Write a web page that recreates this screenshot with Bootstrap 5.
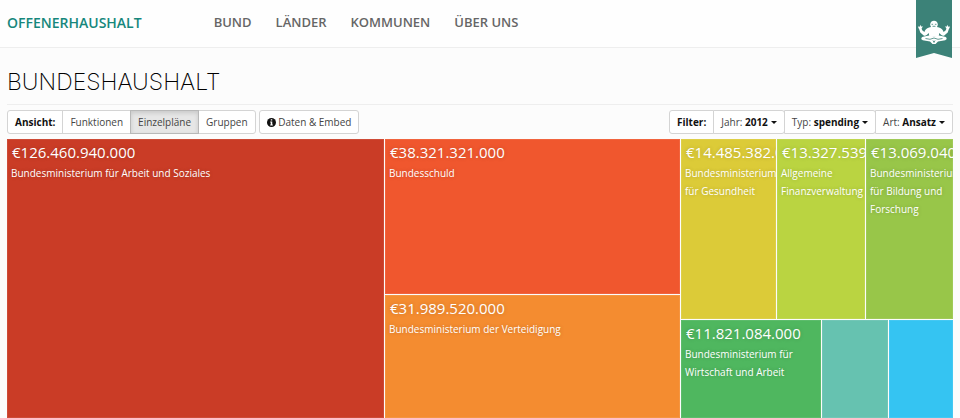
<!DOCTYPE html>
<html lang="de">
<head>
<meta charset="utf-8">
<meta name="viewport" content="width=device-width, initial-scale=1">
<title>OffenerHaushalt – Bundeshaushalt</title>
<link href="https://cdn.jsdelivr.net/npm/bootstrap@5.3.0/dist/css/bootstrap.min.css" rel="stylesheet">
<style>
body { font-family: "Open Sans", sans-serif; font-size: 10px; background: #fcfcfc; color: #333; }
.page-pad { padding-left: 7px; padding-right: 7px; }
.site-nav { height: 48px; background: #fefefe; border-bottom: 1px solid #eee; padding-bottom: 2px; }
.site-nav a { font-size: 13px; font-weight: 600; color: #666; text-decoration: none; }
.site-nav .brand-link { font-size: 14px; line-height: 20px; color: #16877c; margin-right: 72px; }
.site-nav .menu { gap: 24px; }
.ribbon { top: 0; right: 8px; width: 36px; height: 58px; }
.page-title { font-family: Inter, "Liberation Sans", sans-serif; font-weight: 200; font-size: 23px; line-height: 30px; color: #000; padding: 19px 0 7px; border-bottom: 1px solid #eee; }
.toolbar { padding: 5px 0 5px; gap: 3px; }
.toolbar .btn { --bs-btn-font-size: 10px; --bs-btn-padding-x: 7px; --bs-btn-padding-y: 3px; --bs-btn-line-height: 16px; --bs-btn-border-radius: 3px; --bs-btn-bg: #fff; --bs-btn-border-color: #d4d4d4; --bs-btn-color: #444; --bs-btn-hover-bg: #eee; --bs-btn-hover-border-color: #bbb; --bs-btn-active-bg: #e6e6e6; --bs-btn-active-border-color: #b8b8b8; --bs-btn-active-color: #444; }
.toolbar .btn.active { box-shadow: inset 0 2px 4px rgba(0,0,0,.13); }
.toolbar strong { color: #111; }
.toolbar .dropdown-toggle::after { margin-left: 3px; vertical-align: 2px; border-top-width: 3px; border-left-width: 3px; border-right-width: 3px; color: #111; }
.info-mark { width: 9px; height: 9px; vertical-align: -1px; }
.treemap, .treemap div { gap: 1px; }
.treemap div { min-width: 0; min-height: 0; }
.tile { flex-basis: 0; overflow: hidden; color: #fff; text-decoration: none; box-shadow: inset 0 0 0 1px rgba(255,255,255,.08); text-shadow: 0 0 4px rgba(0,0,0,.2); min-width: 0; min-height: 0; }
.tile:hover { color: #fff; }
.amount { display: block; font-size: 15px; line-height: 22px; padding: 2px 0 0 5px; white-space: nowrap; }
.caption { display: block; font-size: 10px; line-height: 18px; padding: 1px 0 0 4px; }
.basis-0 { flex-basis: 0; }
</style>
<script src="https://cdn.jsdelivr.net/npm/bootstrap@5.3.0/dist/js/bootstrap.bundle.min.js"></script>
</head>
<body class="d-flex flex-column min-vh-100 position-relative">
<header>
  <nav class="site-nav page-pad d-flex align-items-center" aria-label="Hauptmenü">
    <a class="brand-link" href="#">OFFENERHAUSHALT</a>
    <div class="menu d-flex">
      <a href="#">BUND</a><a href="#">LÄNDER</a><a href="#">KOMMUNEN</a><a href="#">ÜBER UNS</a>
    </div>
  </nav>
  <a class="ribbon position-absolute" href="#" aria-label="Open Knowledge Foundation">
    <svg class="d-block" width="36" height="58" viewBox="0 0 36 58">
      <path d="M0 0h36v58l-18-5-18 5z" fill="#3c8278"/>
      <g fill="#fff">
        <path d="M14.200 24.500c0-2.200 1.600-3.700 3.800-3.700s3.800 1.500 3.800 3.700-1.500 3.700-3.800 3.700-3.800-1.500-3.800-3.700z"/>
        <path d="M13 27.500c2-1 8-1 10 0 2.500.8 4 2.500 4.600 4.500l2.200-1.700.6-1.800-1.400-2.200 1.500.4.900-1.900.7 2 1.400-.5c.5 1 .2 2-.6 2.600l-1.200 3.600-3.400 3c-1 .5-2.300.2-3.300-.8L23.300 33l-.6 3.500h-9.400l-.6-3.500L11 34.700c-1 1-2.300 1.300-3.300.8l-3.400-3-1.200-3.600c-.8-.6-1.100-1.600-.6-2.600l1.400.5.7-2 .9 1.900 1.500-.4-1.400 2.200.6 1.800 2.200 1.700c.6-2 2.100-3.700 4.600-4.500z"/>
        <path d="M13 35.500c3 1 7 1 10 0l6 1.300c2 .5 2.300 2.700.2 3.400l-7.200 1.400-2.500 2.400h-3L14 41.600l-7.200-1.400c-2.100-.7-1.800-2.900.2-3.400z"/>
      </g>
      <path d="M15.500 24.300h1.600m1.800 0h1.600M16.500 26.300h3M9.500 38.500l4.500.8 4-1.300 4 1.300 4.500-.8M17 40.500l1 2 1-2" fill="none" stroke="#3c8278" stroke-width=".8"/>
    </svg>
  </a>
</header>
<main class="page-pad d-flex flex-column flex-grow-1">
  <h1 class="page-title m-0">BUNDESHAUSHALT</h1>
  <div class="toolbar d-flex flex-wrap">
    <div class="btn-group" role="group" aria-label="Ansicht">
      <button type="button" class="btn"><strong>Ansicht:</strong></button>
      <button type="button" class="btn">Funktionen</button>
      <button type="button" class="btn active" aria-pressed="true">Einzelpläne</button>
      <button type="button" class="btn">Gruppen</button>
    </div>
    <button type="button" class="btn"><svg class="info-mark" viewBox="0 0 12 12" aria-hidden="true"><circle cx="6" cy="6" r="6" fill="#111"/><path d="M5 1.700h2v1.700H5zM4.300 4.600H7v4h.8V10H4.300V8.600H5V6h-.7z" fill="#fff"/></svg> Daten &amp; Embed</button>
    <div class="btn-group ms-auto" role="group" aria-label="Filter">
      <button type="button" class="btn"><strong>Filter:</strong></button>
      <button type="button" class="btn dropdown-toggle">Jahr: <strong>2012</strong></button>
      <button type="button" class="btn dropdown-toggle">Typ: <strong>spending</strong></button>
      <button type="button" class="btn dropdown-toggle">Art: <strong>Ansatz</strong></button>
    </div>
  </div>
  <div class="treemap d-flex flex-grow-1">
    <a href="#" class="tile" style="flex-grow:377;background:#ca3c26"><span class="amount">€126.460.940.000</span><span class="caption">Bundesministerium für Arbeit und Soziales</span></a>
    <div class="d-flex flex-column basis-0" style="flex-grow:295">
      <a href="#" class="tile" style="flex-grow:155;background:#f0572e"><span class="amount">€38.321.321.000</span><span class="caption">Bundesschuld</span></a>
      <a href="#" class="tile" style="flex-grow:123;background:#f48c30"><span class="amount">€31.989.520.000</span><span class="caption">Bundesministerium der Verteidigung</span></a>
    </div>
    <div class="d-flex flex-column basis-0" style="flex-grow:272">
      <div class="d-flex basis-0" style="flex-grow:180">
        <a href="#" class="tile" style="flex-grow:95;background:#dccb38"><span class="amount">€14.485.382.000</span><span class="caption">Bundesministerium für Gesundheit</span></a>
        <a href="#" class="tile" style="flex-grow:88;background:#bad441"><span class="amount">€13.327.539.000</span><span class="caption">Allgemeine Finanzverwaltung</span></a>
        <a href="#" class="tile" style="flex-grow:87;background:#98c649"><span class="amount">€13.069.040.000</span><span class="caption">Bundesministerium für Bildung und Forschung</span></a>
      </div>
      <div class="d-flex basis-0" style="flex-grow:98">
        <a href="#" class="tile" style="flex-grow:140;background:#4fb75f"><span class="amount">€11.821.084.000</span><span class="caption">Bundesministerium für Wirtschaft und Arbeit</span></a>
        <a href="#" class="tile" style="flex-grow:66;background:#66c2b0" aria-label="Weiterer Einzelplan"></a>
        <a href="#" class="tile" style="flex-grow:64;background:#35c4f2" aria-label="Weiterer Einzelplan"></a>
      </div>
    </div>
  </div>
</main>
</body>
</html>
